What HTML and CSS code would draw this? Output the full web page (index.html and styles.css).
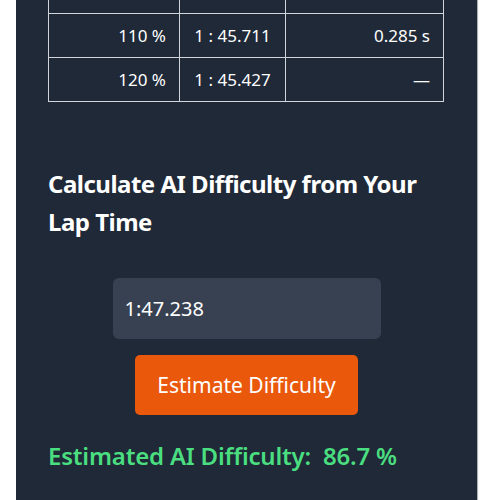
FILE: index.html
```html
<!DOCTYPE html>
<html lang="en">
<head>
<meta charset="utf-8">
<title>AI Difficulty</title>
<link rel="stylesheet" href="styles.css">
</head>
<body>
<main class="card">
  <table class="laps">
    <colgroup>
      <col class="c1"><col class="c2"><col class="c3">
    </colgroup>
    <tbody>
      <tr class="cut"><td></td><td></td><td></td></tr>
      <tr><td class="num">110 %</td><td class="time">1 : 45.711</td><td class="num">0.285 s</td></tr>
      <tr><td class="num">120 %</td><td class="time">1 : 45.427</td><td class="num">—</td></tr>
    </tbody>
  </table>

  <h2 class="title">Calculate AI Difficulty from Your Lap Time</h2>

  <div class="form">
    <input class="lap-input" type="text" value="1:47.238">
    <button class="btn" type="button">Estimate Difficulty</button>
  </div>

  <p class="result">Estimated AI Difficulty:&nbsp; 86.7 %</p>
</main>
</body>
</html>
```

FILE: styles.css
```css
html, body {
  margin: 0;
  padding: 0;
  background: #ffffff;
}

body {
  font-family: "Noto Sans", "Open Sans", sans-serif;
  color: #ffffff;
}

.card {
  width: 461px;
  margin-left: 16px;
  box-sizing: border-box;
  background: #1f2937;
  padding: 0 32px 36px;
  border-radius: 0 0 8px 8px;
  box-shadow: 1px 0 1px rgba(0, 0, 0, 0.35);
}

.laps {
  width: 396px;
  border-collapse: collapse;
  table-layout: fixed;
  font-size: 17px;
}

.c1 { width: 131px; }
.c2 { width: 106px; }
.c3 { width: 158px; }

.laps td {
  border: 1px solid #d1d5db;
  height: 44px;
  padding: 0 13px;
  box-sizing: border-box;
}

.laps tr.cut td {
  border-top: none;
  height: 13px;
}

.num { text-align: right; }
.time { text-align: center; }

.title {
  margin: 63px 0 0;
  font-size: 24px;
  line-height: 38px;
  font-weight: 700;
  letter-spacing: -0.5px;
}

.form {
  display: flex;
  flex-direction: column;
  align-items: center;
  gap: 16px;
  margin-top: 37px;
}

.lap-input {
  width: 268px;
  height: 61px;
  box-sizing: border-box;
  background: #374151;
  border: none;
  border-radius: 6px;
  padding: 0 12px;
  color: #ffffff;
  font-family: inherit;
  font-size: 20px;
  outline: none;
}

.btn {
  width: 223px;
  height: 60px;
  background: #ea580c;
  color: #ffffff;
  border: none;
  border-radius: 5px;
  font-family: inherit;
  font-size: 21px;
  padding: 0;
}

.result {
  margin: 24px 0 0;
  font-size: 24px;
  line-height: 34px;
  font-weight: 600;
  color: #4ade80;
  letter-spacing: -0.2px;
}
```
